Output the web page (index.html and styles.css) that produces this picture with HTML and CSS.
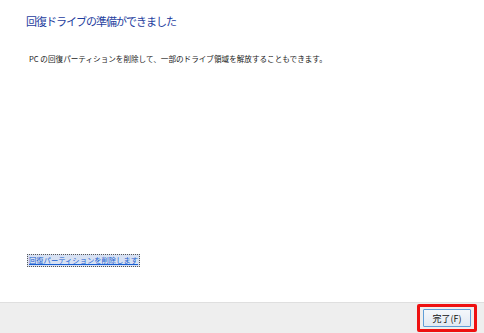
FILE: index.html
```html
<!DOCTYPE html>
<html lang="ja">
<head>
    <meta charset="UTF-8">
    <title>回復ドライブ</title>
    <link rel="stylesheet" href="styles.css">
</head>
<body>
    <div id="wizard">
        <div id="content">
            <h1 class="title">回復ドライブの準備ができました</h1>
            <p class="desc">PC の回復パーティションを削除して、一部のドライブ領域を解放することもできます。</p>
            <a class="deleteLink" href="#">回復パーティションを削除します</a>
        </div>
        <div id="footer">
            <div class="focusMark">
                <button class="finishBtn">完了(F)</button>
            </div>
        </div>
    </div>
</body>
</html>
```

FILE: styles.css
```css
html, body {
    width: 484px;
    height: 333px;
    margin: 0;
    padding: 0;
    overflow: hidden;
    background: #ffffff;
    font-family: "Noto Sans CJK JP", "Noto Sans", sans-serif;
}

#wizard {
    display: flex;
    flex-direction: column;
    height: 333px;
}

#content {
    flex: 1;
    display: flex;
    flex-direction: column;
    padding: 12px 0 0 26px;
}

.title {
    margin: 0;
    font-size: 11px;
    letter-spacing: -1px;
    font-weight: normal;
    color: #1e3d9e;
    line-height: 18px;
}

.desc {
    margin: 23px 0 0 3px;
    font-size: 7.6px;
    color: #1a1a1a;
    line-height: 12px;
}

.deleteLink {
    margin-top: auto;
    margin-bottom: 35px;
    align-self: flex-start;
    font-size: 7.3px;
    line-height: 11px;
    color: #1a5fd0;
    background: #d7e1f3;
    border: 1px dotted #555555;
    padding: 0 1px;
    margin-left: 1px;
}

#footer {
    height: 30px;
    flex: none;
    background: #eeeeee;
    border-top: 1px solid #dfdfdf;
    display: flex;
    justify-content: flex-end;
    align-items: center;
    padding-right: 7px;
}

.focusMark {
    border: 3px solid #ee1111;
    border-radius: 2px;
    padding: 2px 3px;
    display: flex;
}

.finishBtn {
    width: 48px;
    height: 18px;
    font-family: "Noto Sans CJK JP", "Noto Sans", sans-serif;
    font-size: 9px;
    color: #111111;
    background: linear-gradient(#f4f7fb, #e2e9f2);
    border: 1px solid #5f9ed8;
    border-radius: 1px;
    padding: 0;
}
```
